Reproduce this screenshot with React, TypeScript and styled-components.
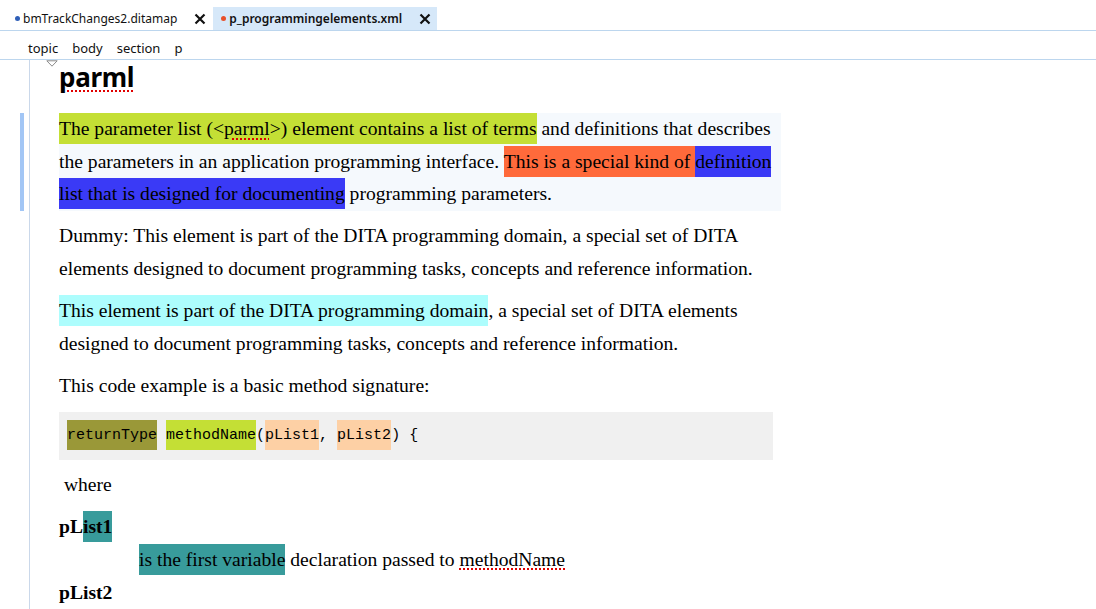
import React from "react";
import styled, { createGlobalStyle } from "styled-components";

const GlobalStyle = createGlobalStyle`
  html, body {
    margin: 0;
    padding: 0;
    background: #ffffff;
  }
  body {
    font-family: "Liberation Serif", "Times New Roman", serif;
    color: #000;
  }
`;

const Colors = {
  line: "#bcd6ee",
  gutter: "#cad8ea",
  tabActive: "#d6e8f9",
  lime: "#c4df35",
  orange: "#ff6a3b",
  blue: "#3a3af6",
  cyan: "#adfdfd",
  olive: "#9a9838",
  peach: "#fdd0a5",
  teal: "#389b9b",
  paraTint: "#f5f9fd",
  changeBar: "#a2c6f5",
  codeBg: "#f0f0f0",
};

const Window = styled.div`
  width: 1096px;
  height: 609px;
  overflow: hidden;
  display: flex;
  flex-direction: column;
`;

const TabBar = styled.div`
  height: 30px;
  flex-shrink: 0;
  display: flex;
  align-items: flex-end;
  border-bottom: 1px solid ${Colors.line};
  padding-left: 7px;
  width: 1089px;
  font-family: "Noto Sans", "Liberation Sans", sans-serif;
  font-size: 12px;
`;

const Tab = styled.div<{ $active?: boolean }>`
  height: 23px;
  display: flex;
  align-items: center;
  gap: 3px;
  padding: 0 6px 0 8px;
  margin-right: 1px;
  background: ${(p) => (p.$active ? Colors.tabActive : "transparent")};
  font-weight: ${(p) => (p.$active ? 600 : 400)};
  color: #111;
`;

const Dot = styled.span<{ $color: string }>`
  width: 5px;
  height: 5px;
  border-radius: 50%;
  background: ${(p) => p.$color};
  flex-shrink: 0;
`;

const TabLabel = styled.span`
  margin-right: 14px;
`;

const CloseIcon = () => (
  <svg width="12" height="12" viewBox="0 0 12 12">
    <path
      d="M1.5 1.5 L10.5 10.5 M10.5 1.5 L1.5 10.5"
      stroke="#111"
      strokeWidth="2.2"
      strokeLinecap="butt"
    />
  </svg>
);

const Breadcrumb = styled.div`
  height: 29px;
  flex-shrink: 0;
  display: flex;
  align-items: center;
  gap: 14px;
  padding: 6px 0 0 28px;
  box-sizing: border-box;
  width: 1096px;
  border-bottom: 1px solid ${Colors.line};
  font-family: "Noto Sans", "Liberation Sans", sans-serif;
  font-size: 13px;
  color: #111;
`;

const Editor = styled.div`
  flex: 1;
  margin-left: 29px;
  border-left: 1px solid ${Colors.gutter};
  padding-left: 29px;
`;

const Heading = styled.h1`
  position: relative;
  margin: 2px 0 21px;
  font-family: "Noto Sans", "Open Sans", sans-serif;
  font-size: 26px;
  line-height: 30px;
  font-weight: 700;
  letter-spacing: -0.3px;
`;

const Fold = styled.svg`
  position: absolute;
  left: -13px;
  top: -2px;
`;

const Para = styled.p<{ $changed?: boolean; $tint?: boolean }>`
  position: relative;
  width: 722px;
  margin: 0 0 9.5px;
  font-size: 19.6px;
  line-height: 32.6px;
  background: ${(p) => (p.$tint ? Colors.paraTint : "transparent")};

  &::before {
    content: "";
    display: ${(p) => (p.$changed ? "block" : "none")};
    position: absolute;
    left: -39px;
    top: 0;
    bottom: 0;
    width: 4px;
    background: ${Colors.changeBar};
  }
`;

const Mark = styled.span<{ $color: string }>`
  background: ${(p) => p.$color};
  padding: 5.1px 0;
  -webkit-box-decoration-break: clone;
  box-decoration-break: clone;
`;

const Squiggle = styled.span`
  text-decoration-line: underline;
  text-decoration-style: dotted;
  text-decoration-color: #e00000;
  text-decoration-thickness: 2px;
  text-underline-offset: 3px;
`;

const CodeBlock = styled.div`
  width: 698px;
  margin: 0 0 9.5px;
  padding: 9px 8px;
  background: ${Colors.codeBg};
  font-family: "Liberation Mono", "DejaVu Sans Mono", monospace;
  font-size: 15px;
  line-height: 30px;
  white-space: pre;
`;

const CodeMark = styled.span<{ $color: string }>`
  background: ${(p) => p.$color};
  padding: 6.5px 0;
`;

const DefList = styled.dl`
  margin: 0;
  font-size: 19.6px;
  line-height: 32.6px;
`;

const Term = styled.dt`
  font-weight: 700;
`;

const Definition = styled.dd`
  margin: 0 0 0 80px;
`;

export default function App() {
  return (
    <Window>
      <GlobalStyle />
      <TabBar>
        <Tab>
          <Dot $color="#2f5fb8" />
          <TabLabel>bmTrackChanges2.ditamap</TabLabel>
          <CloseIcon />
        </Tab>
        <Tab $active>
          <Dot $color="#e8502a" />
          <TabLabel>p_programmingelements.xml</TabLabel>
          <CloseIcon />
        </Tab>
      </TabBar>
      <Breadcrumb>
        <span>topic</span>
        <span>body</span>
        <span>section</span>
        <span>p</span>
      </Breadcrumb>
      <Editor>
        <Heading>
          <Fold width="12" height="7" viewBox="0 0 12 7">
            <path d="M0.8 0.8 H11.2 L6 6.2 Z" fill="none" stroke="#8a8a8a" strokeWidth="1" />
          </Fold>
          <Squiggle>parml</Squiggle>
        </Heading>

        <Para $changed $tint>
          <Mark $color={Colors.lime}>
            The parameter list (&lt;<Squiggle>parml</Squiggle>&gt;) element contains a list of terms
          </Mark>{" "}
          and definitions that describes the parameters in an application programming interface.{" "}
          <Mark $color={Colors.orange}>This is a special kind of </Mark>
          <Mark $color={Colors.blue}>definition list that is designed for documenting</Mark> programming
          parameters.
        </Para>

        <Para>
          Dummy: This element is part of the DITA programming domain, a special set of DITA elements
          designed to document programming tasks, concepts and reference information.
        </Para>

        <Para>
          <Mark $color={Colors.cyan}>This element is part of the DITA programming domain</Mark>, a special
          set of DITA elements designed to document programming tasks, concepts and reference information.
        </Para>

        <Para>This code example is a basic method signature:</Para>

        <CodeBlock>
          <CodeMark $color={Colors.olive}>returnType</CodeMark>{" "}
          <CodeMark $color={Colors.lime}>methodName</CodeMark>(
          <CodeMark $color={Colors.peach}>pList1</CodeMark>,{" "}
          <CodeMark $color={Colors.peach}>pList2</CodeMark>) {"{"}
        </CodeBlock>

        <Para>{"\u00a0"}where</Para>

        <DefList>
          <Term>
            pL<Mark $color={Colors.teal}>ist1</Mark>
          </Term>
          <Definition>
            <Mark $color={Colors.teal}>is the first variable</Mark> declaration passed to{" "}
            <Squiggle>methodName</Squiggle>
          </Definition>
          <Term>pList2</Term>
        </DefList>
      </Editor>
    </Window>
  );
}
